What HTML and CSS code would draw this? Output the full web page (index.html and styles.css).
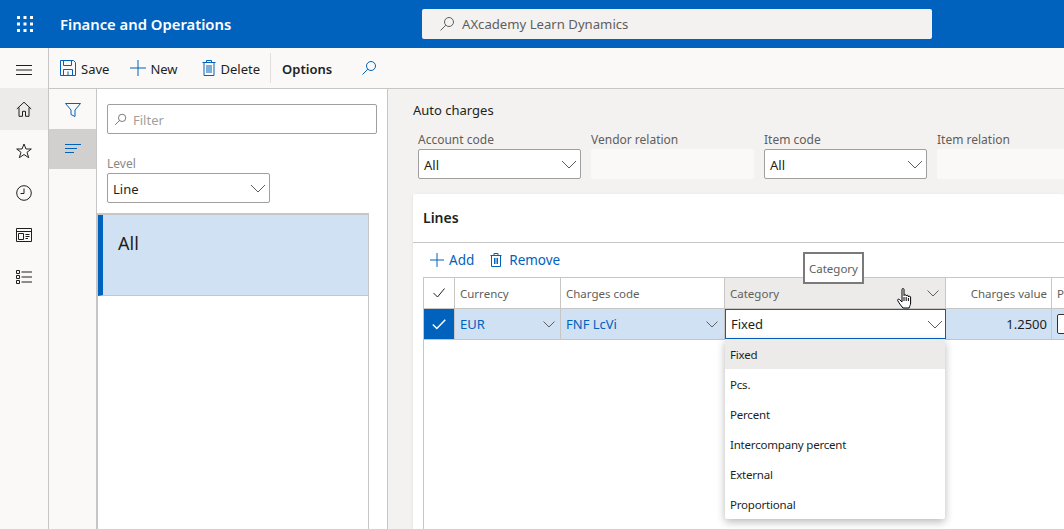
FILE: index.html
```html
<!DOCTYPE html>
<html lang="en">
<head>
  <meta charset="UTF-8">
  <title>Auto charges</title>
  <link rel="stylesheet" href="styles.css">
</head>
<body>
  <header class="topbar">
    <svg class="waffle" width="18" height="18" viewBox="0 0 18 18" fill="#fff">
      <rect x="1" y="1" width="3" height="3"/><rect x="7.5" y="1" width="3" height="3"/><rect x="14" y="1" width="3" height="3"/>
      <rect x="1" y="7.5" width="3" height="3"/><rect x="7.5" y="7.5" width="3" height="3"/><rect x="14" y="7.5" width="3" height="3"/>
      <rect x="1" y="14" width="3" height="3"/><rect x="7.5" y="14" width="3" height="3"/><rect x="14" y="14" width="3" height="3"/>
    </svg>
    <div class="app-name">Finance and Operations</div>
    <div class="top-search">
      <svg width="16" height="16" viewBox="0 0 16 16" fill="none" stroke="#605e5c"><circle cx="10" cy="6" r="4.5"/><path d="M6.8 9.2 1.5 14.5"/></svg>
      <span>AXcademy Learn Dynamics</span>
    </div>
  </header>

  <div class="shell">
    <nav class="sidenav">
      <div class="nav-item nav-burger">
        <svg width="16" height="10" viewBox="0 0 16 10" stroke="#201f1e"><path d="M0 .5h16M0 5h16M0 9.5h16"/></svg>
      </div>
      <div class="nav-item nav-active">
        <svg width="16" height="16" viewBox="0 0 16 16" fill="none" stroke="#201f1e"><path d="M.8 8 8 1.2 15.2 8M3 6.5v8.8h3.5v-5h3v5H13V6.500"/></svg>
      </div>
      <div class="nav-item">
        <svg width="16" height="16" viewBox="0 0 16 16" fill="none" stroke="#201f1e"><path d="M8 1l2 5h5.300l-4.300 3.300 1.700 5.400L8 11.500l-4.700 3.200L5 9.300.7 6H6z"/></svg>
      </div>
      <div class="nav-item">
        <svg width="16" height="16" viewBox="0 0 16 16" fill="none" stroke="#201f1e"><circle cx="8" cy="8" r="7.300"/><path d="M8 3.500V8.500H4.500"/></svg>
      </div>
      <div class="nav-item">
        <svg width="16" height="14" viewBox="0 0 16 14" fill="none" stroke="#201f1e"><path d="M.5.500h15v13H.5zM.5 3.500h15M2.500 5.500h5v6h-5zM9.500 6.500h4M9.500 8.500h4M9.500 10.500h2.500"/></svg>
      </div>
      <div class="nav-item">
        <svg width="16" height="14" viewBox="0 0 16 14" fill="none" stroke="#201f1e"><path d="M.5.500h3v3h-3zM.5 5.500h3v3h-3zM.5 10.500h3v3h-3zM5.500 2H16M5.500 7H16M5.500 12H16"/></svg>
      </div>
    </nav>

    <div class="workspace">
      <div class="actions">
        <button class="action action-save">
          <svg width="16" height="16" viewBox="0 0 16 16" fill="none" stroke="#0062bd"><path d="M.5.500h13l2 2v13H.5zM3.500.500v5h8v-5M3.500 15.500v-6h9v6M8 11.500v4"/></svg>
          Save
        </button>
        <button class="action action-new">
          <svg width="16" height="16" viewBox="0 0 16 16" stroke="#0062bd"><path d="M8 0v16M0 8h16"/></svg>
          New
        </button>
        <button class="action action-delete">
          <svg width="14" height="16" viewBox="0 0 14 16" fill="none" stroke="#0062bd"><path d="M.5 2.500h13M2 2.500v13h10v-13M4.500 2.500v-2h5v2M5 5v8M7 5v8M9 5v8"/></svg>
          Delete
        </button>
        <span class="action-sep"></span>
        <button class="action action-strong">Options</button>
        <svg class="action-find" width="16" height="16" viewBox="0 0 16 16" fill="none" stroke="#0062bd"><circle cx="10" cy="6" r="4.500"/><path d="M6.800 9.200 1.500 14.500"/></svg>
      </div>

      <div class="page">
        <div class="rail">
          <div class="rail-item">
            <svg width="16" height="14" viewBox="0 0 16 14" fill="none" stroke="#0062bd"><path d="M.5.500h15L10 7v6.500l-4-2V7z"/></svg>
          </div>
          <div class="rail-item rail-active">
            <svg width="16" height="10" viewBox="0 0 16 10" stroke="#0062bd"><path d="M0 .500h16M0 4.500h12M0 8.500h9"/></svg>
          </div>
        </div>

        <aside class="filter-pane">
          <div class="filter-box">
            <svg width="13" height="13" viewBox="0 0 16 16" fill="none" stroke="#605e5c"><circle cx="10" cy="6" r="4.500"/><path d="M6.800 9.200 1.500 14.500"/></svg>
            <span>Filter</span>
          </div>
          <label class="pane-label">Level</label>
          <div class="select select-level">
            <span>Line</span>
            <svg class="chev" width="16" height="9" viewBox="0 0 16 9" fill="none" stroke="#605e5c"><path d="M1 1l7 7 7-7"/></svg>
          </div>
          <div class="level-list">
            <div class="level-row">All</div>
          </div>
        </aside>

        <main class="content">
          <div class="section-title">Auto charges</div>
          <div class="fields">
            <div class="field">
              <label>Account code</label>
              <div class="select"><span>All</span><svg class="chev" width="16" height="9" viewBox="0 0 16 9" fill="none" stroke="#605e5c"><path d="M1 1l7 7 7-7"/></svg></div>
            </div>
            <div class="field">
              <label>Vendor relation</label>
              <div class="readonly"></div>
            </div>
            <div class="field">
              <label>Item code</label>
              <div class="select"><span>All</span><svg class="chev" width="16" height="9" viewBox="0 0 16 9" fill="none" stroke="#605e5c"><path d="M1 1l7 7 7-7"/></svg></div>
            </div>
            <div class="field">
              <label>Item relation</label>
              <div class="readonly"></div>
            </div>
          </div>

          <section class="card">
            <h2 class="card-title">Lines</h2>
            <div class="card-tools">
              <button class="tool">
                <svg width="14" height="14" viewBox="0 0 14 14" stroke="#0062bd"><path d="M7 0v14M0 7h14"/></svg>
                Add
              </button>
              <button class="tool tool-remove">
                <svg width="12" height="14" viewBox="0 0 12 14" fill="none" stroke="#0062bd"><path d="M.5 2.500h11M1.500 2.500v11h9v-11M4 2.500v-2h4v2M4.500 5v6M6 5v6M7.500 5v6"/></svg>
                Remove
              </button>
            </div>

            <div class="grid">
              <div class="grid-row grid-head">
                <div class="cell col-check">
                  <svg width="12" height="10" viewBox="0 0 12 10" fill="none" stroke="#201f1e"><path d="M.5 5l4 4 7-8.500"/></svg>
                </div>
                <div class="cell col-currency">Currency</div>
                <div class="cell col-charges">Charges code</div>
                <div class="cell col-category cell-hover">
                  <span>Category</span>
                  <svg class="chev-sm" width="12" height="7" viewBox="0 0 12 7" fill="none" stroke="#605e5c"><path d="M.5.500 6 6l5.500-5.500"/></svg>
                </div>
                <div class="cell col-value cell-right">Charges value</div>
                <div class="cell col-last">P</div>
              </div>
              <div class="grid-row grid-selected">
                <div class="cell col-check cell-checked">
                  <svg width="14" height="11" viewBox="0 0 14 11" fill="none" stroke="#fff" stroke-width="1.500"><path d="M.8 5.500l4 4 8.500-8.800"/></svg>
                </div>
                <div class="cell col-currency cell-link">
                  <span>EUR</span>
                  <svg class="chev-sm" width="12" height="7" viewBox="0 0 12 7" fill="none" stroke="#605e5c"><path d="M.5.500 6 6l5.500-5.500"/></svg>
                </div>
                <div class="cell col-charges cell-link">
                  <span>FNF LcVi</span>
                  <svg class="chev-sm" width="12" height="7" viewBox="0 0 12 7" fill="none" stroke="#605e5c"><path d="M.5.500 6 6l5.500-5.500"/></svg>
                </div>
                <div class="cell col-category cell-edit">
                  <span>Fixed</span>
                  <svg width="16" height="9" viewBox="0 0 16 9" fill="none" stroke="#605e5c"><path d="M1 1l7 7 7-7"/></svg>
                </div>
                <div class="cell col-value cell-right cell-dark">1.2500</div>
                <div class="cell col-last"><span class="mini-check"></span></div>
              </div>
            </div>

            <div class="tooltip">Category</div>
            <svg class="hand" width="16" height="21" viewBox="0 0 16 21" fill="#fff" stroke="#000">
              <path d="M5 1.500c0-1.300 2-1.300 2 0V7.500c0-1 2.200-1 2.200 0V8c0-1 2.200-1 2.200 0v1c0-1 2.200-1 2.200 0v6c0 2-1 3-1.500 5H6C3.500 17 2 15 .7 12.500c-.5-1 .8-2 1.800-1L5 14z"/>
              <path d="M7 9v4M9.200 9v4M11.400 10v3" fill="none"/>
            </svg>
            <ul class="dropdown">
              <li class="dropdown-active">Fixed</li>
              <li>Pcs.</li>
              <li>Percent</li>
              <li>Intercompany percent</li>
              <li>External</li>
              <li>Proportional</li>
            </ul>
          </section>
        </main>
      </div>
    </div>
  </div>
</body>
</html>
```

FILE: styles.css
```css
* { box-sizing: border-box; }
html, body { height: 100%; }
body { margin: 0; height: 529px; overflow: hidden; font-family: "Noto Sans", "Open Sans", Arial, sans-serif; font-size: 12px; color: #201f1e; background: #f3f2f1; display: flex; flex-direction: column; }
button { font: inherit; background: none; border: none; padding: 0; color: inherit; display: flex; align-items: center; }
svg { display: block; flex: none; }

.topbar { height: 48px; flex: none; background: #0062bd; color: #fff; display: flex; align-items: center; padding-left: 16px; }
.app-name { margin-left: 26px; width: 362px; font-size: 14.8px; font-weight: 600; }
.top-search { width: 510px; height: 30px; background: #f3f2f1; border-radius: 2px; display: flex; align-items: center; gap: 7px; padding-left: 17px; font-size: 13.15px; color: #605e5c; }

.shell { flex: 1; display: flex; min-height: 0; }
.sidenav { width: 49px; flex: none; background: #faf9f8; border-right: 1px solid #c8c6c4; }
.nav-item { height: 42px; display: flex; align-items: center; justify-content: center; }
.nav-burger { height: 40px; padding-top: 3px; }
.nav-active { background: #edebe9; }

.workspace { flex: 1; display: flex; flex-direction: column; min-width: 0; }
.actions { height: 41px; flex: none; background: #faf9f8; border-bottom: 1px solid #c8c6c4; display: flex; align-items: center; padding: 2px 0 0 11px; font-size: 13px; }
.actions svg, .action-sep { margin-top: -2px; }
.action { gap: 5px; }
.action-save { margin-right: 21px; }
.action-new { gap: 4px; margin-right: 24px; }
.action-delete { margin-right: 10px; }
.action-sep { width: 1px; height: 30px; background: #e1dfdd; margin-right: 11px; }
.action-strong { font-weight: 600; margin-right: 29px; }

.page { flex: 1; display: flex; min-height: 0; }
.rail { width: 48px; flex: none; background: #faf9f8; border-right: 1px solid #c8c6c4; }
.rail-item { height: 40px; display: flex; align-items: center; justify-content: center; }
.rail-item:first-child { padding-top: 2px; }
.rail-active { background: #d2d0ce; }

.filter-pane { width: 291px; flex: none; background: #fff; border-right: 1px solid #c8c6c4; padding: 15px 10px 0 10px; display: flex; flex-direction: column; align-items: flex-start; color: #201f1e; }
.filter-box { width: 270px; height: 30px; border: 1px solid #a19f9d; border-radius: 2px; display: flex; align-items: center; gap: 6px; padding: 2px 0 0 6px; font-size: 13px; color: #a19f9d; flex: none; }
.filter-box svg { margin-top: -2px; }
.pane-label { margin-top: 21px; height: 18px; color: #8a8886; }
.select { width: 163px; height: 30px; background: #fff; border: 1px solid #a19f9d; border-radius: 2px; display: flex; align-items: center; justify-content: space-between; padding: 2px 3px 0 5px; font-size: 13px; flex: none; }
.select .chev { margin-top: -2px; }
.level-list { margin: 10px 0 0 -10px; width: 272px; flex: 1; border: 1px solid #c8c6c4; border-top-width: 2px; border-bottom: none; }
.level-row { height: 81px; background: #d0e1f3; border-left: 5px solid #0062bd; border-bottom: 1px solid #c8c6c4; padding: 15px 0 0 15px; font-size: 18px; line-height: 26px; }

.content { flex: 1; min-width: 0; overflow: hidden; padding: 12px 0 0 25px; }
.section-title { font-size: 13px; line-height: 18px; }
.fields { display: flex; gap: 10px; margin: 12px 0 0 5px; }
.field { width: 163px; flex: none; }
.field label { display: block; height: 18px; line-height: 18px; font-size: 12px; color: #605e5c; }
.field .readonly { height: 30px; background: #faf9f8; border-radius: 2px; }

.card { position: relative; margin-top: 15px; height: 340px; background: #fff; border-radius: 2px; box-shadow: 0 1px 3px rgba(0,0,0,0.1); }
.card-title { margin: 0; height: 49px; border-bottom: 1px solid #c8c6c4; padding: 13px 0 0 10px; font-size: 14px; font-weight: 600; line-height: 22px; }
.card-tools { display: flex; height: 34px; align-items: center; gap: 16px; padding-left: 17px; font-size: 13.5px; color: #0062bd; }
.tool { gap: 5px; }
.tool-remove { gap: 7px; }

.grid { margin-left: 10px; border-left: 1px solid #c8c6c4; height: 260px; width: 660px; }
.grid-row { display: flex; height: 32px; border-top: 1px solid #c8c6c4; border-bottom: 1px solid #c8c6c4; }
.grid-selected { height: 31px; border-top: none; background: #d0e1f3; }
.cell { display: flex; align-items: center; justify-content: space-between; padding: 0 5px; border-right: 1px solid #c8c6c4; flex: none; }
.grid-head .cell { color: #605e5c; font-size: 11.5px; }
.col-check { width: 31px; justify-content: center; padding: 0; }
.col-currency { width: 106px; }
.col-charges { width: 164px; padding-right: 6px; }
.col-category { width: 221px; }
.col-value { width: 106px; padding-right: 4px; }
.col-last { width: 20px; border-right: none; justify-content: flex-start; }
.cell-right { justify-content: flex-end; }
.cell-hover { background: #edebe9; }
.cell-checked { background: #0062bd; }
.cell-link { color: #0062bd; font-size: 13px; }
.cell-dark { font-size: 13px; color: #201f1e; }
.cell-edit { background: #fff; border: 1px solid #0062bd; font-size: 13px; color: #201f1e; padding-right: 2px; }
.grid-head .col-category .chev-sm { margin-right: 1px; }
.mini-check { display: block; width: 14px; height: 20px; border: 1px solid #323130; border-radius: 2px; background: #fff; }

.tooltip { position: absolute; left: 390px; top: 58px; width: 61px; height: 32px; background: #fff; border: 2px solid #7a7a7a; display: flex; align-items: center; justify-content: center; font-size: 11.5px; color: #605e5c; }
.hand { position: absolute; left: 484px; top: 94px; }
.dropdown { position: absolute; left: 312px; top: 145px; width: 220px; margin: 0; padding: 0; list-style: none; background: #fff; border-radius: 0 0 2px 2px; box-shadow: 0 3px 8px rgba(0,0,0,0.28); font-size: 11.5px; letter-spacing: -0.2px; }
.dropdown li { height: 30px; line-height: 31px; padding-left: 5px; }
.dropdown-active { background: #edebe9; }
```
